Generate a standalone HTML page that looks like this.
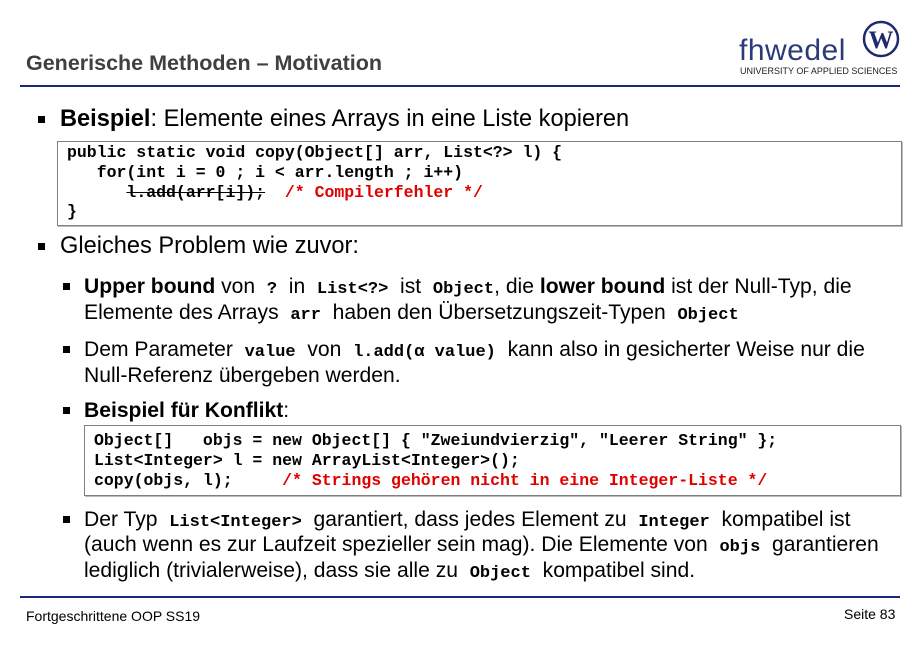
<!DOCTYPE html>
<html><head><meta charset="utf-8"><style>
body{margin:0;width:920px;height:650px;background:#fff;position:relative;font-family:"Liberation Sans",Arial,sans-serif;color:#000;overflow:hidden}
.a{position:absolute;white-space:pre;line-height:1}
.t{font-size:21.5px;font-weight:bold;color:#404040}
.l1{font-size:23.6px}
.l2{font-size:21.1px}
.c{font-family:"Liberation Mono","Courier New",monospace;font-weight:bold;font-size:16.5px}
.ic{font-family:"Liberation Mono","Courier New",monospace;font-weight:bold;font-size:17px}
.r{color:#e00000}
.b{position:absolute;width:7px;height:7px;background:#000}
.box{position:absolute;border:1px solid #808080;box-shadow:1px 1px 0 #bbb}
</style></head><body>
<div class="a t" style="left:26px;top:53px">Generische Methoden – Motivation</div>
<div class="a" style="left:739px;top:36px;font-size:30px;color:#2b3a7a;letter-spacing:0.5px">fhwedel</div>
<svg style="position:absolute;left:862px;top:20px" width="38" height="38"><circle cx="19" cy="19" r="17" fill="#fff" stroke="#1f2a6e" stroke-width="2.5"/><text x="19" y="28" text-anchor="middle" font-family="Liberation Serif" font-weight="bold" font-size="25" fill="#1f2a6e">W</text></svg>
<div class="a" style="left:740px;top:67px;font-size:9px;color:#222">UNIVERSITY OF APPLIED SCIENCES</div>
<div style="position:absolute;left:20px;top:85px;width:880px;height:2px;background:#1a2a7a"></div>

<div class="b" style="left:38px;top:116px"></div>
<div class="a l1" style="left:60px;top:108px"><b>Beispiel</b>: Elemente eines Arrays in eine Liste kopieren</div>
<div class="box" style="left:57px;top:141px;width:843px;height:83px"></div>
<div class="a c" style="left:67px;top:145px">public static void copy(Object[] arr, List&lt;?&gt; l) {</div>
<div class="a c" style="left:67px;top:165px">   for(int i = 0 ; i &lt; arr.length ; i++)</div>
<div class="a c" style="left:67px;top:185px">      <span style="text-decoration:line-through">l.add(arr[i]);</span>  <span class="r">/* Compilerfehler */</span></div>
<div class="a c" style="left:67px;top:204px">}</div>

<div class="b" style="left:38px;top:243px"></div>
<div class="a l1" style="left:60px;top:235px">Gleiches Problem wie zuvor:</div>

<div class="b" style="left:63px;top:283px"></div>
<div class="a l2" style="left:84px;top:276px"><b>Upper bound</b> von  <span class="ic">?</span>  in  <span class="ic">List&lt;?&gt;</span>  ist  <span class="ic">Object</span>, die <b>lower bound</b> ist der Null-Typ, die</div>
<div class="a l2" style="left:84px;top:302px">Elemente des Arrays  <span class="ic">arr</span>  haben den Übersetzungszeit-Typen  <span class="ic">Object</span></div>

<div class="b" style="left:63px;top:346px"></div>
<div class="a l2" style="left:84px;top:339px">Dem Parameter  <span class="ic">value</span>  von  <span class="ic">l.add(α value)</span>  kann also in gesicherter Weise nur die</div>
<div class="a l2" style="left:84px;top:365px">Null-Referenz übergeben werden.</div>

<div class="b" style="left:63px;top:407px"></div>
<div class="a l2" style="left:84px;top:400px"><b>Beispiel für Konflikt</b>:</div>
<div class="box" style="left:84px;top:425px;width:815px;height:69px"></div>
<div class="a c" style="left:94px;top:433px">Object[]   objs = new Object[] { "Zweiundvierzig", "Leerer String" };</div>
<div class="a c" style="left:94px;top:453px">List&lt;Integer&gt; l = new ArrayList&lt;Integer&gt;();</div>
<div class="a c" style="left:94px;top:473px">copy(objs, l);     <span class="r">/* Strings gehören nicht in eine Integer-Liste */</span></div>

<div class="b" style="left:63px;top:516px"></div>
<div class="a l2" style="left:84px;top:509px">Der Typ  <span class="ic">List&lt;Integer&gt;</span>  garantiert, dass jedes Element zu  <span class="ic">Integer</span>  kompatibel ist</div>
<div class="a l2" style="left:84px;top:534px">(auch wenn es zur Laufzeit spezieller sein mag). Die Elemente von  <span class="ic">objs</span>  garantieren</div>
<div class="a l2" style="left:84px;top:560px">lediglich (trivialerweise), dass sie alle zu  <span class="ic">Object</span>  kompatibel sind.</div>

<div style="position:absolute;left:20px;top:596px;width:880px;height:2px;background:#1a2a7a"></div>
<div class="a" style="left:26px;top:609px;font-size:14px">Fortgeschrittene OOP SS19</div>
<div class="a" style="left:844px;top:607px;font-size:14px">Seite 83</div>
</body></html>
